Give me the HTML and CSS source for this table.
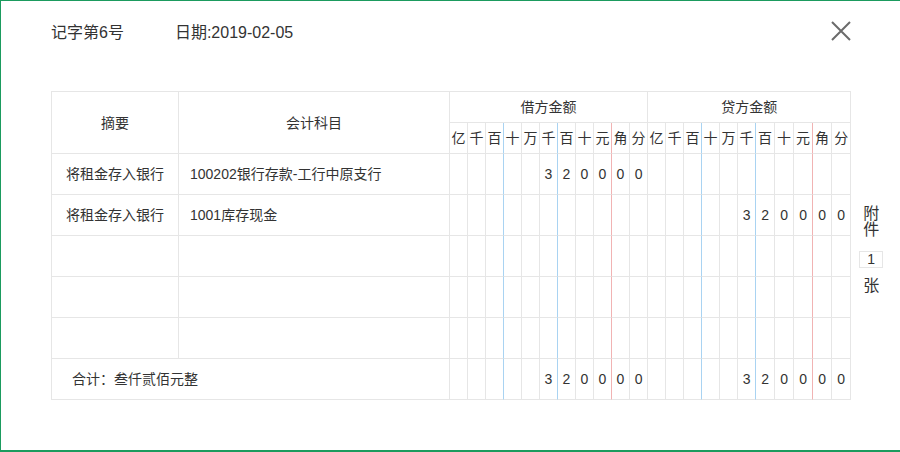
FILE: index.html
```html
<!DOCTYPE html>
<html lang="zh-CN">
<head>
<meta charset="utf-8">
<title>记账凭证</title>
<link rel="stylesheet" href="styles.css">
</head>
<body>
<div class="modal">
  <div class="modal-head">
    <span class="voucher-no">记字第6号</span>
    <span class="voucher-date">日期:2019-02-05</span>
    <span class="spacer"></span>
    <svg class="close" width="20" height="20" viewBox="0 0 20 20" aria-label="关闭">
      <path d="M1 1 L19 19 M19 1 L1 19" stroke="#6b6b6b" stroke-width="2" fill="none"/>
    </svg>
  </div>
  <div class="modal-body">
    <table class="voucher">
      <colgroup>
        <col class="c-sum"><col class="c-acct">
        <col class="c-d"><col class="c-d"><col class="c-d"><col class="c-d"><col class="c-d"><col class="c-d"><col class="c-d"><col class="c-d"><col class="c-d"><col class="c-d"><col class="c-d">
        <col class="c-d"><col class="c-d"><col class="c-d"><col class="c-d"><col class="c-d"><col class="c-d"><col class="c-w"><col class="c-w"><col class="c-w"><col class="c-w"><col class="c-w">
      </colgroup>
      <thead>
        <tr class="h1">
          <th rowspan="2">摘要</th>
          <th rowspan="2">会计科目</th>
          <th colspan="11">借方金额</th>
          <th colspan="11">贷方金额</th>
        </tr>
        <tr class="h2">
          <th class="d">亿</th><th class="d">千</th><th class="d b">百</th><th class="d">十</th><th class="d">万</th><th class="d b">千</th><th class="d">百</th><th class="d">十</th><th class="d r">元</th><th class="d">角</th><th class="d">分</th>
          <th class="d">亿</th><th class="d">千</th><th class="d b">百</th><th class="d">十</th><th class="d">万</th><th class="d b">千</th><th class="d">百</th><th class="d">十</th><th class="d r">元</th><th class="d">角</th><th class="d">分</th>
        </tr>
      </thead>
      <tbody>
        <tr>
          <td class="sum">将租金存入银行</td>
          <td class="acct">100202银行存款-工行中原支行</td>
          <td class="d"></td><td class="d"></td><td class="d b"></td><td class="d"></td><td class="d"></td><td class="d b">3</td><td class="d">2</td><td class="d">0</td><td class="d r">0</td><td class="d">0</td><td class="d">0</td>
          <td class="d"></td><td class="d"></td><td class="d b"></td><td class="d"></td><td class="d"></td><td class="d b"></td><td class="d"></td><td class="d"></td><td class="d r"></td><td class="d"></td><td class="d"></td>
        </tr>
        <tr>
          <td class="sum">将租金存入银行</td>
          <td class="acct">1001库存现金</td>
          <td class="d"></td><td class="d"></td><td class="d b"></td><td class="d"></td><td class="d"></td><td class="d b"></td><td class="d"></td><td class="d"></td><td class="d r"></td><td class="d"></td><td class="d"></td>
          <td class="d"></td><td class="d"></td><td class="d b"></td><td class="d"></td><td class="d"></td><td class="d b">3</td><td class="d">2</td><td class="d">0</td><td class="d r">0</td><td class="d">0</td><td class="d">0</td>
        </tr>
        <tr>
          <td class="sum"></td><td class="acct"></td>
          <td class="d"></td><td class="d"></td><td class="d b"></td><td class="d"></td><td class="d"></td><td class="d b"></td><td class="d"></td><td class="d"></td><td class="d r"></td><td class="d"></td><td class="d"></td>
          <td class="d"></td><td class="d"></td><td class="d b"></td><td class="d"></td><td class="d"></td><td class="d b"></td><td class="d"></td><td class="d"></td><td class="d r"></td><td class="d"></td><td class="d"></td>
        </tr>
        <tr>
          <td class="sum"></td><td class="acct"></td>
          <td class="d"></td><td class="d"></td><td class="d b"></td><td class="d"></td><td class="d"></td><td class="d b"></td><td class="d"></td><td class="d"></td><td class="d r"></td><td class="d"></td><td class="d"></td>
          <td class="d"></td><td class="d"></td><td class="d b"></td><td class="d"></td><td class="d"></td><td class="d b"></td><td class="d"></td><td class="d"></td><td class="d r"></td><td class="d"></td><td class="d"></td>
        </tr>
        <tr>
          <td class="sum"></td><td class="acct"></td>
          <td class="d"></td><td class="d"></td><td class="d b"></td><td class="d"></td><td class="d"></td><td class="d b"></td><td class="d"></td><td class="d"></td><td class="d r"></td><td class="d"></td><td class="d"></td>
          <td class="d"></td><td class="d"></td><td class="d b"></td><td class="d"></td><td class="d"></td><td class="d b"></td><td class="d"></td><td class="d"></td><td class="d r"></td><td class="d"></td><td class="d"></td>
        </tr>
        <tr class="total">
          <td class="total-label" colspan="2">合计：叁仟贰佰元整</td>
          <td class="d"></td><td class="d"></td><td class="d b"></td><td class="d"></td><td class="d"></td><td class="d b">3</td><td class="d">2</td><td class="d">0</td><td class="d r">0</td><td class="d">0</td><td class="d">0</td>
          <td class="d"></td><td class="d"></td><td class="d b"></td><td class="d"></td><td class="d"></td><td class="d b">3</td><td class="d">2</td><td class="d">0</td><td class="d r">0</td><td class="d">0</td><td class="d">0</td>
        </tr>
      </tbody>
    </table>
    <div class="attach">
      <span class="attach-word">附</span>
      <span class="attach-word">件</span>
      <span class="attach-count">1</span>
      <span class="attach-word attach-unit">张</span>
    </div>
  </div>
</div>
</body>
</html>
```

FILE: styles.css
```css
* {
  box-sizing: border-box;
}

html, body {
  margin: 0;
  padding: 0;
  background: #ffffff;
}

body {
  width: 900px;
  height: 452px;
  overflow: hidden;
  font-family: "Liberation Sans", "Noto Sans CJK SC", sans-serif;
  color: #333333;
}

.modal {
  width: 920px;
  height: 452px;
  border-top: 1px solid #1b9b5e;
  border-left: 1px solid #1b9b5e;
  border-bottom: 2px solid #1b9b5e;
  background: #ffffff;
}

.modal-head {
  display: flex;
  align-items: center;
  height: 64px;
  padding: 0 69px 0 50px;
  font-size: 16px;
  line-height: 20px;
}

.voucher-no {
  margin-right: 51px;
}

.spacer {
  flex: 1;
}

.close {
  display: block;
  align-self: flex-start;
  margin-top: 20px;
}

.modal-body {
  display: flex;
  align-items: flex-start;
  gap: 8px;
  padding: 26px 0 0 50px;
}

.voucher {
  table-layout: fixed;
  width: 800px;
  border-collapse: separate;
  border-spacing: 0;
  border-top: 1px solid #e6e6e6;
  border-left: 1px solid #e6e6e6;
  font-size: 14px;
}

.c-sum { width: 127px; }
.c-acct { width: 271px; }
.c-d { width: 18px; }
.c-w { width: 19px; }

.voucher th,
.voucher td {
  border-right: 1px solid #e6e6e6;
  border-bottom: 1px solid #e6e6e6;
  padding: 0;
  font-weight: normal;
  text-align: center;
  vertical-align: middle;
  line-height: 16px;
  white-space: nowrap;
  overflow: hidden;
}

.voucher .h1 th,
.voucher .h2 th {
  height: 31px;
}

.voucher tbody td {
  height: 41px;
}

.voucher .d.b {
  border-right-color: #a9d3f2;
}

.voucher .d.r {
  border-right-color: #f1b3b3;
}

.voucher td.acct {
  text-align: left;
  padding-left: 11px;
}

.voucher td.total-label {
  text-align: left;
  padding-left: 20px;
}

.attach {
  display: flex;
  flex-direction: column;
  align-items: center;
  width: 24px;
  align-self: center;
  padding-top: 9px;
}

.attach-word {
  display: block;
  font-size: 16px;
  line-height: 16px;
}

.attach-count {
  display: block;
  width: 24px;
  height: 17px;
  margin-top: 13px;
  border: 1px solid #e6e6e6;
  font-size: 14px;
  line-height: 15px;
  text-align: center;
}

.attach-unit {
  margin-top: 10px;
}
```
